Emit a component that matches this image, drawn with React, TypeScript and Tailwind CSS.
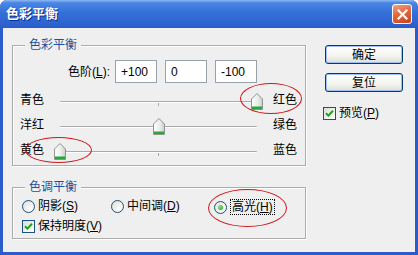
import React from "react";

const ui = "font-['Liberation_Sans','Noto_Sans_CJK_SC',sans-serif] text-[12px] leading-[14px] text-black";

function Key({ k }: { k: string }) {
  return (
    <>
      (<span className="underline underline-offset-[1px]">{k}</span>)
    </>
  );
}

function Thumb() {
  return (
    <svg width="12" height="17" viewBox="0 0 12 17">
      <defs>
        <linearGradient id="thumbFill" x1="0" y1="0" x2="1" y2="0">
          <stop offset="0" stopColor="#ffffff" />
          <stop offset="0.6" stopColor="#e9ece8" />
          <stop offset="1" stopColor="#c9cec9" />
        </linearGradient>
      </defs>
      <path d="M0.5 6 L6 0.5 L11.5 6 L11.5 16.5 L0.5 16.5 Z" fill="url(#thumbFill)" stroke="#8a958f" />
      <rect x="1" y="13.5" width="10" height="2.5" fill="#25a93a" />
    </svg>
  );
}

function SliderRow({ left, right, pct }: { left: string; right: string; pct: number }) {
  return (
    <div className="flex h-[25px] items-center">
      <span className="w-[47px] pl-[7px]">{left}</span>
      <div className="relative h-[17px] w-[197px]">
        <div className="absolute inset-x-0 top-[10px] h-[2px] rounded-full border-t border-[#a9a9a9] bg-white" />
        <div className="absolute left-[98px] top-[12px] h-[3px] w-px bg-[#a9a9a9]" />
        <div className="absolute top-[2px]" style={{ left: pct * 197 - 6 }}>
          <Thumb />
        </div>
      </div>
      <span className="ml-[16px]">{right}</span>
    </div>
  );
}

function Group({ title, className, children }: { title: string; className: string; children: React.ReactNode }) {
  return (
    <div
      className={`relative w-[294px] border border-[#acacac] shadow-[inset_1px_1px_0_#fff,1px_1px_0_#fff] ${className}`}
    >
      <span className="absolute left-[12px] top-[-8px] bg-[#efefef] px-[4px] text-[#1f4f9f]">{title}</span>
      {children}
    </div>
  );
}

function Radio({ checked }: { checked?: boolean }) {
  return (
    <span className="flex h-[13px] w-[13px] items-center justify-center rounded-full border border-[#1c5180] bg-[radial-gradient(circle_at_70%_70%,#ffffff,#dcdcd6)]">
      {checked ? <span className="h-[5px] w-[5px] rounded-full bg-[radial-gradient(circle_at_35%_35%,#8fe07f,#21a121)]" /> : null}
    </span>
  );
}

function Check() {
  return (
    <span className="flex h-[13px] w-[13px] items-center justify-center border border-[#1c5180] bg-[linear-gradient(135deg,#dcdcd6,#ffffff)]">
      <svg width="9" height="9" viewBox="0 0 9 9">
        <path d="M1 4.2 L3.4 6.6 L8 1.8" fill="none" stroke="#21a121" strokeWidth="2" />
      </svg>
    </span>
  );
}

function Button({ label }: { label: string }) {
  return (
    <button
      type="button"
      className="flex h-[19px] w-[78px] items-center justify-center rounded-[3px] border border-[#003c74] bg-[linear-gradient(180deg,#ffffff_0%,#f3f3ef_60%,#dedcd5_100%)] shadow-[inset_0_0_0_1px_#9fc0f0]"
    >
      {label}
    </button>
  );
}

function Input({ value }: { value: string }) {
  return (
    <div className="flex h-[23px] w-[42px] items-center border border-[#97a1ab] bg-white pl-[5px]">{value}</div>
  );
}

export default function App() {
  return (
    <div className={`relative h-[255px] w-[418px] overflow-hidden rounded-t-[7px] bg-[#2a5dcc] ${ui}`}>
      <div className="flex h-[28px] items-center justify-between bg-[linear-gradient(180deg,#8cbaf2_0%,#4a86e4_10%,#3470d8_45%,#2d63cf_85%,#2a5bc8_100%)] pl-[6px] pr-[6px]">
        <span className="text-[13px] font-bold leading-[16px] text-white [text-shadow:1px_1px_0_#0c2e8a]">色彩平衡</span>
        <span className="flex h-[20px] w-[20px] items-center justify-center rounded-[3px] border border-white bg-[linear-gradient(160deg,#f0a183_0%,#e2673f_45%,#c9441c_100%)]">
          <svg width="11" height="11" viewBox="0 0 11 11">
            <path d="M1.5 1.5 L9.5 9.5 M9.5 1.5 L1.5 9.5" stroke="#fff" strokeWidth="2.2" strokeLinecap="square" />
          </svg>
        </span>
      </div>

      <div className="mx-[3px] flex h-[224px] bg-[#efefef] pl-[9px]">
        <div className="flex flex-col pt-[17px]">
          <Group title="色彩平衡" className="h-[121px] pt-[14px]">
            <div className="flex items-center">
              <span className="w-[102px] pr-[5px] text-right">
                色阶<Key k="L" />:
              </span>
              <Input value="+100" />
              <div className="ml-[8px]">
                <Input value="0" />
              </div>
              <div className="ml-[8px]">
                <Input value="-100" />
              </div>
            </div>
            <div className="mt-[4px]">
              <SliderRow left="青色" right="红色" pct={1} />
              <SliderRow left="洋红" right="绿色" pct={0.5} />
              <SliderRow left="黄色" right="蓝色" pct={0} />
            </div>
          </Group>

          <Group title="色调平衡" className="mt-[21px] h-[52px] pt-[11px]">
            <div className="flex h-[20px] items-start pl-[9px]">
              <label className="flex w-[89px] items-center gap-[3px]">
                <Radio />
                <span>
                  阴影<Key k="S" />
                </span>
              </label>
              <label className="flex w-[103px] items-center gap-[3px]">
                <Radio />
                <span>
                  中间调<Key k="D" />
                </span>
              </label>
              <label className="flex items-center gap-[3px]">
                <Radio checked />
                <span className="border border-dotted border-black px-px">
                  高光<Key k="H" />
                </span>
              </label>
            </div>
            <label className="flex items-center gap-[3px] pl-[9px]">
              <Check />
              <span>
                保持明度<Key k="V" />
              </span>
            </label>
          </Group>
        </div>

        <div className="ml-[17px] flex flex-col pt-[17px]">
          <div className="ml-[2px] flex flex-col gap-[9px]">
            <Button label="确定" />
            <Button label="复位" />
          </div>
          <label className="mt-[14px] flex items-center gap-[3px]">
            <Check />
            <span>
              预览<Key k="P" />
            </span>
          </label>
        </div>
      </div>

      <div className="pointer-events-none absolute left-[240px] top-[83px] h-[31px] w-[62px] rounded-[50%] border border-[#d0161a]" />
      <div className="pointer-events-none absolute left-[25px] top-[137px] h-[26px] w-[67px] rounded-[50%] border border-[#d0161a]" />
      <div className="pointer-events-none absolute left-[208px] top-[189px] h-[38px] w-[79px] rounded-[50%] border border-[#d0161a]" />
    </div>
  );
}
